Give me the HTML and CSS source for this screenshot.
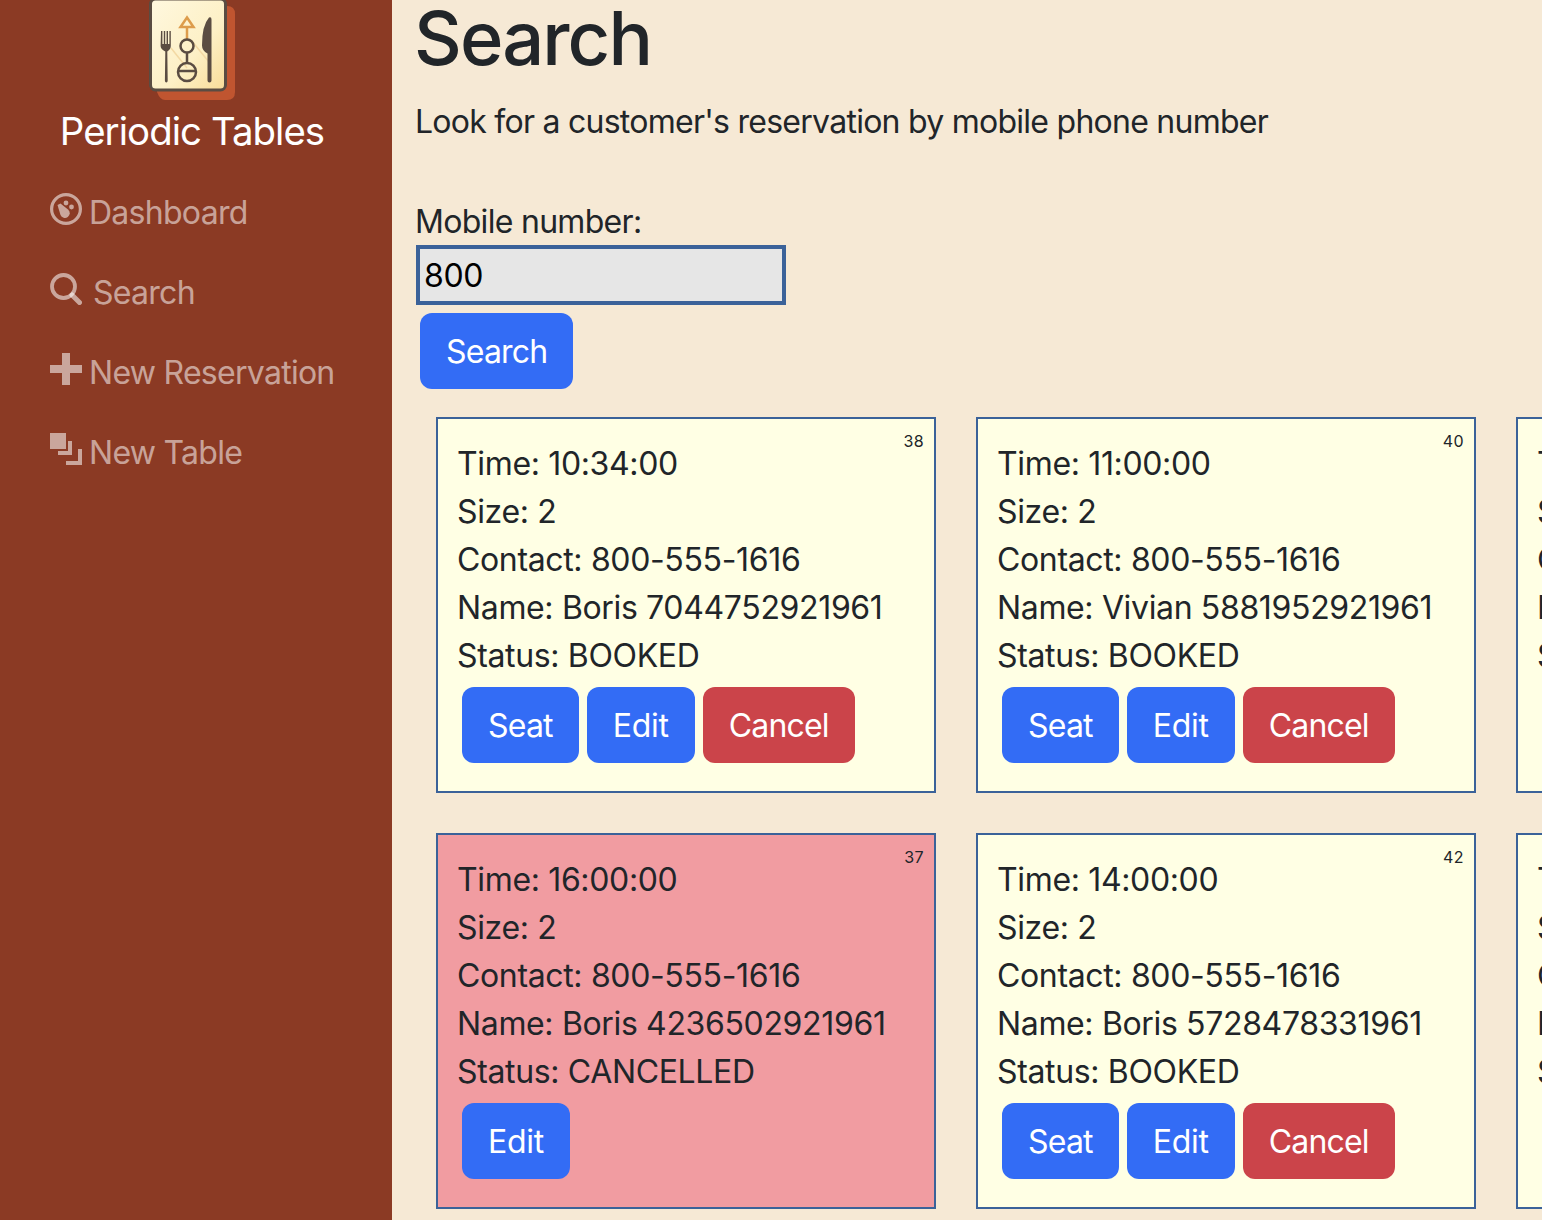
FILE: index.html
```html
<!DOCTYPE html>
<html>
<head>
  <title>Periodic Tables</title>
  <link rel="stylesheet" href="styles.css">
</head>
<body>
  <!-- Sidebar -->
  <aside class="sidebar">
    <a class="brand" href="#">
      <svg class="logo" viewBox="0 0 90 104" width="90" height="104">
        <defs>
          <linearGradient id="card-fill" x1="0" y1="0" x2="1" y2="1">
            <stop offset="0" stop-color="#fff8df"/>
            <stop offset="0.6" stop-color="#fdf0c6"/>
            <stop offset="1" stop-color="#f8dc98"/>
          </linearGradient>
        </defs>
        <path d="M8 6h70q8 0 8 8v78q0 8-8 8H16q-5 0-8-8z" fill="#c05530"/>
        <rect x="1.500" y="-1" width="75" height="91" rx="5" fill="url(#card-fill)" stroke="#5a4c42" stroke-width="3"/>
        <path d="M22 48l16 20M42 40l18 22" fill="none" stroke="#f3d9a4" stroke-width="1.500"/>
        <path d="M38 17.500l6.500 9.500h-13zM38 27v12" fill="none" stroke="#dd9c4c" stroke-width="2.500"/>
        <g fill="none" stroke="#5a4c42" stroke-width="2.500">
          <circle cx="38" cy="46" r="6.500"/>
          <path d="M38 52.500v11"/>
          <circle cx="38" cy="72" r="9"/>
          <path d="M29 71h18"/>
        </g>
        <path d="M12 31h1.400v13h1.400v-13h1.400v13h1.400v-13h1.400v13h1.400v-13h1.400v15q0 3-3.500 5.500l.4 29q0 2-1.400 2t-1.400-2l.4-29q-4.700-2.500-4.700-5.500z" fill="#5a4c42"/>
        <path d="M60 17.500q2.500-1 2.500 2v61q0 2-2 2t-2-2v-27q-5.500-3-5.500-8 0-20 7-28z" fill="#5a4c42"/>
      </svg>
      <span class="brand-name">Periodic Tables</span>
    </a>
    <nav class="side-nav">
      <a href="#">
        <svg class="nav-icon" viewBox="0 0 32 32"><circle cx="16" cy="16" r="14.400" fill="none" stroke="currentColor" stroke-width="3.200"/><path d="M7.500 12l3-1.500 7.500 6a4.800 4.800 0 1 1-7.500 5.500z" fill="currentColor"/><circle cx="16" cy="10" r="2.400" fill="currentColor"/><circle cx="21.500" cy="14" r="2.400" fill="currentColor"/></svg>
        <span>Dashboard</span>
      </a>
      <a href="#" class="nav-search">
        <svg class="nav-icon" viewBox="0 0 32 32"><circle cx="13.500" cy="13.500" r="11.500" fill="none" stroke="currentColor" stroke-width="3.800"/><path d="M22 22l7.500 7.500" stroke="currentColor" stroke-width="5" stroke-linecap="round"/></svg>
        <span>Search</span>
      </a>
      <a href="#">
        <svg class="nav-icon" viewBox="0 0 32 32"><path d="M12 0h8v12h12v8H20v12h-8V20H0v-8h12z" fill="currentColor"/></svg>
        <span>New Reservation</span>
      </a>
      <a href="#">
        <svg class="nav-icon" viewBox="0 0 32 32"><path d="M0 0h16v16H0zM18 8h4v14H8v-4h10zM28 16h4v16H16v-4h12z" fill="currentColor"/></svg>
        <span>New Table</span>
      </a>
    </nav>
  </aside>

  <!-- Search page -->
  <main class="content">
    <h1>Search</h1>
    <p class="lead">Look for a customer's reservation by mobile phone number</p>

    <form class="search-form">
      <label for="mobile">Mobile number:</label>
      <input id="mobile" type="text" value="800">
      <button class="btn btn-primary search-btn" type="button">Search</button>
    </form>

    <div class="reservations">
      <div class="card">
        <span class="card-id">38</span>
        <p>Time: 10:34:00</p>
        <p>Size: 2</p>
        <p>Contact: 800-555-1616</p>
        <p>Name: Boris 7044752921961</p>
        <p>Status: BOOKED</p>
        <div class="card-actions">
          <button class="btn btn-primary" type="button">Seat</button>
          <button class="btn btn-primary btn-edit" type="button">Edit</button>
          <button class="btn btn-danger" type="button">Cancel</button>
        </div>
      </div>
      <div class="card">
        <span class="card-id">40</span>
        <p>Time: 11:00:00</p>
        <p>Size: 2</p>
        <p>Contact: 800-555-1616</p>
        <p>Name: Vivian 5881952921961</p>
        <p>Status: BOOKED</p>
        <div class="card-actions">
          <button class="btn btn-primary" type="button">Seat</button>
          <button class="btn btn-primary btn-edit" type="button">Edit</button>
          <button class="btn btn-danger" type="button">Cancel</button>
        </div>
      </div>
      <div class="card">
        <span class="card-id">41</span>
        <p>Time: 12:00:00</p>
        <p>Size: 2</p>
        <p>Contact: 800-555-1616</p>
        <p>Name: Boris 5728478331961</p>
        <p>Status: BOOKED</p>
        <div class="card-actions">
          <button class="btn btn-primary" type="button">Seat</button>
          <button class="btn btn-primary btn-edit" type="button">Edit</button>
          <button class="btn btn-danger" type="button">Cancel</button>
        </div>
      </div>
      <div class="card cancelled">
        <span class="card-id">37</span>
        <p>Time: 16:00:00</p>
        <p>Size: 2</p>
        <p>Contact: 800-555-1616</p>
        <p>Name: Boris 4236502921961</p>
        <p>Status: CANCELLED</p>
        <div class="card-actions">
          <button class="btn btn-primary btn-edit" type="button">Edit</button>
        </div>
      </div>
      <div class="card">
        <span class="card-id">42</span>
        <p>Time: 14:00:00</p>
        <p>Size: 2</p>
        <p>Contact: 800-555-1616</p>
        <p>Name: Boris 5728478331961</p>
        <p>Status: BOOKED</p>
        <div class="card-actions">
          <button class="btn btn-primary" type="button">Seat</button>
          <button class="btn btn-primary btn-edit" type="button">Edit</button>
          <button class="btn btn-danger" type="button">Cancel</button>
        </div>
      </div>
      <div class="card">
        <span class="card-id">43</span>
        <p>Time: 15:00:00</p>
        <p>Size: 2</p>
        <p>Contact: 800-555-1616</p>
        <p>Name: Vivian 5881952921961</p>
        <p>Status: BOOKED</p>
        <div class="card-actions">
          <button class="btn btn-primary" type="button">Seat</button>
          <button class="btn btn-primary btn-edit" type="button">Edit</button>
          <button class="btn btn-danger" type="button">Cancel</button>
        </div>
      </div>
    </div>
  </main>
</body>
</html>
```

FILE: styles.css
```css
/* General Styles */
body {
    margin: 0;
    display: flex;
    height: 1220px;
    overflow: hidden;
    font-family: Inter, "Liberation Sans", sans-serif;
    font-size: 32px;
    line-height: 48px;
    color: #212529;
    background-color: #f6e9d5;
}

/* Sidebar */
.sidebar {
    flex: 0 0 392px;
    background-color: #8b3a24;
}

.brand {
    display: flex;
    flex-direction: column;
    align-items: center;
    padding-right: 8px;
    color: white;
    text-decoration: none;
}

.logo {
    display: block;
    margin-left: 4px;
}

.brand-name {
    margin-top: 3px;
    font-size: 38.4px;
    line-height: 48px;
    letter-spacing: -0.95px;
}

.side-nav {
    display: flex;
    flex-direction: column;
    gap: 32px;
    padding: 34px 0 0 50px;
}

.side-nav a {
    display: flex;
    align-items: center;
    gap: 7px;
    height: 48px;
    color: rgba(255, 255, 255, 0.55);
    text-decoration: none;
    letter-spacing: -0.72px;
}

.side-nav .nav-search {
    gap: 11px;
}

.nav-icon {
    width: 32px;
    height: 32px;
    flex: none;
    margin-top: -8px;
}

/* Main content */
.content {
    flex: 1;
    min-width: 0;
    padding-left: 24px;
    overflow: hidden;
}

h1 {
    margin: -10px 0 0 -2px;
    font-size: 74px;
    font-weight: 500;
    line-height: 96px;
    letter-spacing: -1.9px;
}

.lead {
    margin: 12px 0 0 -1px;
    letter-spacing: -0.74px;
}

/* Search form */
.search-form {
    margin-top: 52px;
}

.search-form label {
    display: block;
    margin: 0 0 -1px -1px;
    letter-spacing: -0.7px;
}

.search-form input {
    display: block;
    box-sizing: border-box;
    width: 370px;
    height: 60px;
    margin: 0;
    padding: 0 4px;
    border: 4px solid #3b6299;
    border-radius: 0;
    outline: none;
    background-color: #e6e6e6;
    color: black;
    font-family: inherit;
    font-size: 32px;
    letter-spacing: -0.4px;
}

.btn {
    height: 76px;
    padding: 0 26px;
    border: none;
    border-radius: 12px;
    color: white;
    font-family: inherit;
    font-size: 32px;
    letter-spacing: -0.8px;
}

.btn-edit {
    letter-spacing: -0.25px;
}

.btn-primary {
    background-color: #336cf5;
}

.btn-danger {
    background-color: #cb444a;
    letter-spacing: -0.85px;
}

.search-btn {
    display: block;
    margin: 8px 0 0 4px;
}

/* Reservation cards */
.reservations {
    display: grid;
    grid-template-columns: repeat(3, 500px);
    gap: 40px;
    margin: 28px 0 0 20px;
}

.card {
    position: relative;
    box-sizing: border-box;
    height: 376px;
    padding: 21px 20px 0 19px;
    border: 2px solid #3b6299;
    background-color: #ffffe4;
}

.card.cancelled {
    background-color: #f19ca1;
}

.card p {
    margin: 0;
    letter-spacing: -0.35px;
    white-space: nowrap;
}

.card-id {
    position: absolute;
    top: 10px;
    right: 10px;
    font-size: 16px;
    line-height: 24px;
    letter-spacing: 0.4px;
}

.card-actions {
    display: flex;
    gap: 8px;
    margin: 7px 0 0 5px;
}
```
